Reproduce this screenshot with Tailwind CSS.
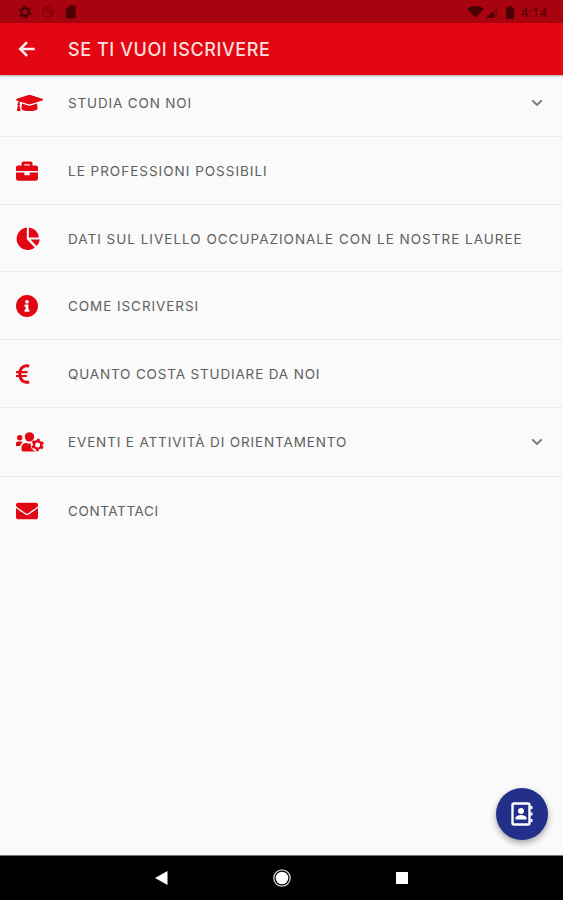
<!DOCTYPE html>
<html lang="it">
<head>
  <meta charset="UTF-8">
  <title>Se ti vuoi iscrivere</title>
  <script src="https://cdn.jsdelivr.net/npm/@tailwindcss/browser@4"></script>
</head>
<body class="bg-[#fafafa] font-['Inter',sans-serif]">
  <div class="relative flex h-screen flex-col overflow-hidden">
    <!-- status bar -->
    <div class="relative z-10 flex h-[23px] shrink-0 items-center justify-between bg-[#a9030f] pr-[15px] pl-[18px] text-[#4d0006]">
      <div class="flex items-center gap-[9px] pt-px">
        <svg class="h-[14px] w-[14px]" viewBox="0 0 24 24" fill="none" stroke="currentColor"><circle cx="12" cy="12" r="6.3" stroke-width="4"/><circle cx="12" cy="12" r="9.3" stroke-width="3.5" stroke-dasharray="4.87 4.87"/></svg>
        <svg class="h-[14px] w-[14px] opacity-50" viewBox="0 0 24 24" fill="none" stroke="currentColor" stroke-width="2"><circle cx="12" cy="12" r="9"/><path d="M5 5l14 14M9 4l11 11"/></svg>
        <svg class="h-[14px] w-[14px]" viewBox="0 0 24 24" fill="currentColor"><path d="M18 1h-8L3 8v13a2 2 0 002 2h13a2 2 0 002-2V3a2 2 0 00-2-2z"/></svg>
      </div>
      <div class="flex items-center pt-px">
        <svg class="h-[12px] w-[17px]" viewBox="0 0 17 12" fill="currentColor"><path d="M8.500 12L0 2.500C5 -.8 12 -.8 17 2.500z"/></svg>
        <svg class="ml-[2px] h-[11px] w-[12px]" viewBox="0 0 12 11" fill="currentColor"><path d="M0 11L11.500 0v11z" opacity=".35"/><path d="M0 11L7.500 4v7z"/></svg>
        <svg class="ml-[8px] h-[13px] w-[8px]" viewBox="0 0 8 13" fill="currentColor"><path d="M2.500 0h3v1.500H8V13H0V1.500h2.500z"/></svg>
        <span class="ml-[7px] w-[27px] font-['Roboto',sans-serif] text-[13px] leading-none tracking-[0.3px] whitespace-nowrap">4:14</span>
      </div>
    </div>

    <!-- app bar -->
    <header class="relative z-10 flex h-[52px] shrink-0 items-center bg-[#e30613] pl-[16px] text-[#ffdede] shadow-[0_1px_2px_rgba(0,0,0,0.35)]">
      <svg class="h-[22px] w-[22px]" viewBox="0 0 24 24" fill="none" stroke="#fff0f0" stroke-width="2.700"><path d="M20.500 12H5M12 4.500L4.500 12l7.500 7.500"/></svg>
      <h1 class="mt-px ml-[30px] text-[18px] font-medium tracking-[0.58px] whitespace-nowrap">SE TI VUOI ISCRIVERE</h1>
    </header>

    <!-- the first row starts under the app bar -->
    <ul class="-mt-[6px] text-[13.5px] text-[#606060] [&>li]:flex [&>li]:items-center [&>li]:pl-[16px] [&>li>span]:whitespace-nowrap">
      <li class="h-[68px] border-b border-[#ededed]">
        <div class="w-[52px] text-[#e30613]">
          <svg class="h-[22px] w-[27px]" viewBox="0 0 640 512" fill="currentColor"><path d="M622.34 153.2L343.4 67.5c-15.2-4.67-31.6-4.67-46.79 0L17.66 153.2c-23.54 7.23-23.54 38.36 0 45.59l48.63 14.94c-10.67 13.19-17.23 29.28-17.88 46.9C38.78 266.15 32 276.11 32 288c0 10.78 5.68 19.85 13.86 25.65L20.33 428.53C18.11 438.52 25.71 448 35.94 448h56.11c10.24 0 17.84-9.48 15.62-19.47L82.14 313.65C90.32 307.85 96 298.78 96 288c0-11.57-6.47-21.25-15.66-26.87.76-15.02 8.44-28.3 20.69-36.72L296.6 284.5c9.06 2.78 26.44 6.25 46.79 0l278.95-85.7c23.55-7.24 23.55-38.36 0-45.6zM352.79 315.09c-28.53 8.76-52.84 3.92-65.59 0l-145.02-44.55L128 384c0 35.35 85.96 64 192 64s192-28.65 192-64l-14.18-113.47-145.03 44.56z"/></svg>
        </div>
        <span class="pt-[2px] tracking-[0.84px]">STUDIA CON NOI</span>
        <svg class="mr-[20px] ml-auto h-[8px] w-[12px]" viewBox="0 0 12 8" fill="none" stroke="#757575" stroke-width="1.900"><path d="M1.300 1.300L6 6l4.700-4.700"/></svg>
      </li>
      <li class="h-[68px] border-b border-[#ededed]">
        <div class="w-[52px] text-[#e30613]">
          <svg class="h-[22px] w-[22px]" viewBox="0 0 512 512" fill="currentColor"><path d="M320 336c0 8.84-7.16 16-16 16h-96c-8.84 0-16-7.16-16-16v-48H0v144c0 25.6 22.4 48 48 48h416c25.6 0 48-22.4 48-48V288H320v48zm144-208h-80V80c0-25.6-22.4-48-48-48H176c-25.6 0-48 22.4-48 48v48H48c-25.6 0-48 22.4-48 48v80h512v-80c0-25.6-22.4-48-48-48zm-144 0H192V96h128v32z"/></svg>
        </div>
        <span class="pt-[2px] tracking-[1px]">LE PROFESSIONI POSSIBILI</span>
      </li>
      <li class="h-[67px] border-b border-[#ededed]">
        <div class="w-[52px] text-[#e30613]">
          <svg class="h-[23px] w-[24px]" viewBox="0 0 24 23" fill="currentColor"><path d="M10.800 .6v11.700l8 8.200A11.200 11.200 0 1 1 10.800 .6z"/><path d="M12.800 .4A10.800 10.800 0 0 1 22.800 10.400H12.800z"/><path d="M14.500 12.600H23.800A11 11 0 0 1 20.600 19z"/></svg>
        </div>
        <span class="pt-[2px] tracking-[1px]">DATI SUL LIVELLO OCCUPAZIONALE CON LE NOSTRE LAUREE</span>
      </li>
      <li class="h-[68px] border-b border-[#ededed]">
        <div class="w-[52px] text-[#e30613]">
          <svg class="h-[22px] w-[22px]" viewBox="8 8 496 496" fill="currentColor"><path d="M256 8C119.043 8 8 119.083 8 256c0 136.997 111.043 248 248 248s248-111.003 248-248C504 119.083 392.957 8 256 8zm0 110c23.196 0 42 18.804 42 42s-18.804 42-42 42-42-18.804-42-42 18.804-42 42-42zm56 254c0 6.627-5.373 12-12 12h-88c-6.627 0-12-5.373-12-12v-24c0-6.627 5.373-12 12-12h12v-64h-12c-6.627 0-12-5.373-12-12v-24c0-6.627 5.373-12 12-12h64c6.627 0 12 5.373 12 12v100h12c6.627 0 12 5.373 12 12v24z"/></svg>
        </div>
        <span class="pt-[2px] tracking-[0.93px]">COME ISCRIVERSI</span>
      </li>
      <li class="h-[68px] border-b border-[#ededed]">
        <div class="w-[52px] text-[#e30613]">
          <svg class="h-[20px] w-[14px]" viewBox="0 0 14 20" fill="none" stroke="currentColor"><path d="M13.200 2.100C8 .4 3.800 3.800 3.800 10s4.200 9.600 9.400 7.900" stroke-width="3"/><path d="M0 8.100h11.500M0 12h10.800" stroke-width="2.200"/></svg>
        </div>
        <span class="pt-px tracking-[0.84px]">QUANTO COSTA STUDIARE DA NOI</span>
      </li>
      <li class="h-[69px] border-b border-[#ededed]">
        <div class="w-[52px] text-[#e30613]">
          <!-- people with a gear -->
          <svg class="h-[20px] w-[28px]" viewBox="0 0 28 20" fill="currentColor">
            <circle cx="3.700" cy="5.800" r="2.700"/>
            <path d="M0 14v-2.500C0 10.300 1 9.500 2.200 9.500h2.600c.8 0 1.500.3 2 .8C5.200 11.200 4.600 12.500 4.300 14z"/>
            <circle cx="13.500" cy="4.900" r="4.700"/>
            <path d="M5.500 17.700v-2c0-2.800 2.200-4.700 4.800-4.700 2 .9 4.200.9 6.200 0l3 8.400H7.300c-1 0-1.800-.8-1.800-1.700z"/>
            <circle cx="21.600" cy="12.900" r="6.900" fill="#fafafa"/>
            <g fill="none" stroke="currentColor"><circle cx="21.600" cy="12.900" r="3.700" stroke-width="2.400"/><circle cx="21.600" cy="12.900" r="5.300" stroke-width="1.900" stroke-dasharray="2.775 2.775" stroke-dashoffset="-1.400"/></g>
          </svg>
        </div>
        <span class="pt-px tracking-[0.86px]">EVENTI E ATTIVITÀ DI ORIENTAMENTO</span>
        <svg class="mr-[20px] ml-auto h-[8px] w-[12px]" viewBox="0 0 12 8" fill="none" stroke="#757575" stroke-width="1.900"><path d="M1.300 1.300L6 6l4.700-4.700"/></svg>
      </li>
      <li class="h-[68px]">
        <div class="w-[52px] text-[#e30613]">
          <svg class="h-[22px] w-[22px]" viewBox="0 0 512 512" fill="currentColor"><path d="M502.3 190.8c3.9-3.1 9.7-.2 9.7 4.7V400c0 26.5-21.5 48-48 48H48c-26.5 0-48-21.5-48-48V195.6c0-5 5.7-7.8 9.7-4.7 22.4 17.4 52.1 39.5 154.1 113.6 21.1 15.4 56.7 47.8 92.2 47.6 35.7.3 72-32.8 92.3-47.6 102-74.1 131.6-96.3 154-113.7zM256 320c23.2.4 56.6-29.2 73.4-41.4 132.7-96.3 142.8-104.7 173.4-128.7 5.8-4.5 9.2-11.5 9.2-18.9v-19c0-26.5-21.5-48-48-48H48c-26.5 0-48 21.5-48 48v19c0 7.4 3.4 14.3 9.2 18.9 30.6 23.9 40.7 32.4 173.4 128.7 16.8 12.2 50.2 41.8 73.4 41.4z"/></svg>
        </div>
        <span class="tracking-[0.6px]">CONTATTACI</span>
      </li>
    </ul>

    <!-- floating contacts button -->
    <button class="absolute right-[15px] bottom-[60px] flex h-[52px] w-[52px] items-center justify-center rounded-full bg-[#223089] shadow-[0_3px_6px_rgba(0,0,0,0.35)]">
      <svg class="h-[24px] w-[22px]" viewBox="0 0 22 24" fill="none" stroke="white"><rect x="1.500" y="1.500" width="17" height="21" rx="1.500" stroke-width="2.400"/><path d="M20.500 4v3M20.500 10.500v3M20.500 17v3" stroke-width="2"/><circle cx="10" cy="9" r="3" fill="white" stroke="none"/><path d="M4.500 17.500v-1.500c0-2 3.500-3 5.500-3s5.500 1 5.500 3v1.500z" fill="white" stroke="none"/></svg>
    </button>

    <!-- navigation bar -->
    <nav class="mt-auto flex h-[45px] shrink-0 items-center border-t border-[#777] bg-black pl-[155px]">
      <svg class="h-[14px] w-[13px]" viewBox="0 0 13 14" fill="white"><path d="M0 7L12.500 0v14z"/></svg>
      <svg class="ml-[105px] h-[18px] w-[18px]" viewBox="0 0 18 18"><circle cx="9" cy="9" r="8.200" fill="none" stroke="#ccc" stroke-width="1.300"/><circle cx="9" cy="9" r="6.300" fill="white"/></svg>
      <svg class="ml-[105px] h-[12px] w-[12px]" viewBox="0 0 12 12"><rect width="12" height="12" rx=".5" fill="white"/></svg>
    </nav>
  </div>
</body>
</html>
